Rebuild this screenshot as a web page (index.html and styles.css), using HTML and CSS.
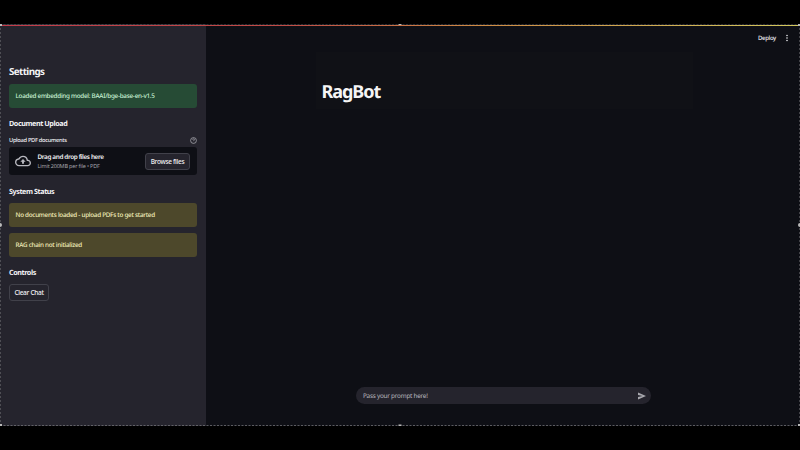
FILE: index.html
```html
<!DOCTYPE html>
<html lang="en">
<head>
<meta charset="utf-8">
<title>RagBot</title>
<link rel="stylesheet" href="styles.css">
</head>
<body>
<div class="app">
  <aside class="sidebar">
    <h2 class="settings">Settings</h2>
    <div class="alert success"><span>Loaded embedding model: BAAI/bge-base-en-v1.5</span></div>
    <h3 class="upload-title">Document Upload</h3>
    <div class="label-row">
      <span class="label">Upload PDF documents</span>
      <svg class="help" viewBox="0 0 24 24"><circle cx="12" cy="12" r="10"/><path d="M9 9a3 3 0 0 1 6 .5c0 2-3 2.500-3 4.500M12 17v.5"/></svg>
    </div>
    <div class="dropzone">
      <svg class="cloud" viewBox="0 0 24 24"><path d="M19.350 10.040A7.490 7.490 0 0 0 12 4C9.110 4 6.600 5.640 5.350 8.040A5.994 5.994 0 0 0 0 14c0 3.310 2.690 6 6 6h13c2.760 0 5-2.240 5-5 0-2.640-2.050-4.780-4.650-4.960zM19 18H6c-2.210 0-4-1.790-4-4 0-2.050 1.530-3.760 3.560-3.970l1.070-.11.5-.95A5.469 5.469 0 0 1 12 6c2.620 0 4.880 1.860 5.390 4.430l.3 1.500 1.530.11A2.980 2.980 0 0 1 22 15c0 1.650-1.350 3-3 3zM8 13h2.550v3h2.900v-3H16l-4-4z"/></svg>
      <div class="drop-text"><span class="drag">Drag and drop files here</span><span class="limit">Limit 200MB per file • PDF</span></div>
      <button class="btn browse">Browse files</button>
    </div>
    <h3 class="status-title">System Status</h3>
    <div class="alert warning"><span>No documents loaded - upload PDFs to get started</span></div>
    <div class="alert warning second"><span>RAG chain not initialized</span></div>
    <h3 class="controls-title">Controls</h3>
    <button class="btn clear">Clear Chat</button>
  </aside>
  <main class="main">
    <header class="toolbar">
      <span class="deploy">Deploy</span>
      <svg class="dots" viewBox="0 0 4 8"><circle cx="2" cy="1.500" r=".8"/><circle cx="2" cy="4" r=".8"/><circle cx="2" cy="6.500" r=".8"/></svg>
    </header>
    <section class="hero"><h1>RagBot</h1></section>
    <div class="prompt">
      <span>Pass your prompt here!</span>
      <svg class="send" viewBox="0 0 8 8"><path d="M0 .5 8 4 0 7.500V5L4.500 4 0 3z"/></svg>
    </div>
  </main>
  <svg class="selection" viewBox="0 0 800 402">
    <path class="dash faint" d="M0 .5H800"/>
    <path class="dash" d="M0 401.500H800"/>
    <path class="dash side" d="M.5 0V402M799.500 0V402"/>
    <path class="knobs" d="M0 0h2v2H0zM798 0h2v2h-2zM0 400h2v2H0zM798 400h2v2h-2zM398.500 0h3v2h-3zM398.500 400.500h3v1.500h-3z"/>
    <circle class="knobs" cx="0" cy="201" r="2"/><circle class="knobs" cx="800" cy="201" r="2"/>
  </svg>
  <div class="rainbow"></div>
</div>
</body>
</html>
```
FILE: styles.css
```css
* { box-sizing: border-box; }
body { margin: 0; background: #000; height: 450px; padding-top: 24px; overflow: hidden; font-family: "Noto Sans", sans-serif; color: #f3f3f5; text-rendering: geometricPrecision; }
.app { position: relative; display: flex; width: 800px; height: 402px; background: #0e0f15; white-space: nowrap; }
h1, h2, h3 { margin: 0; }
.sidebar { width: 206px; padding: 41px 9px 0; background: #25242d; display: flex; flex-direction: column; }
.settings { font-size: 9.800px; line-height: 14px; font-weight: 700; letter-spacing: -.6px; }
h3 { font-size: 7.200px; line-height: 10px; font-weight: 700; letter-spacing: -.42px; }
.alert { height: 24px; border-radius: 3px; padding: 0 0 1px 6.500px; display: flex; align-items: center; font-size: 6.300px; font-weight: 500; letter-spacing: -.26px; }
.success { margin-top: 5px; background: #264b35; color: #c9f3d6; }
.warning { background: #4d482b; color: #f5f0bd; }
.second { margin-top: 6px; }
.upload-title { margin-top: 11px; }
.label-row { margin-top: 6px; height: 10px; display: flex; align-items: center; justify-content: space-between; }
.label { font-size: 5.700px; font-weight: 500; letter-spacing: -.3px; }
.help { width: 7px; height: 7px; fill: none; stroke: #b0b0b7; stroke-width: 2.500; }
.dropzone { margin-top: 2px; height: 28px; border-radius: 3px; background: #0e0f15; display: flex; align-items: center; padding: 0 7px 0 6px; }
.cloud { width: 16px; height: 16px; fill: #b8b8bf; }
.drop-text { margin-left: 6.500px; display: flex; flex-direction: column; flex: 1; }
.drag { font-size: 6.400px; line-height: 9px; font-weight: 600; letter-spacing: -.38px; }
.limit { font-size: 5.500px; line-height: 10px; letter-spacing: -.18px; color: #a3a3aa; }
.btn { display: flex; align-items: center; justify-content: center; padding: 0; height: 17px; border: 1px solid #41414a; border-radius: 3px; background: #25242d; color: #f3f3f5; font-family: inherit; font-size: 6.500px; font-weight: 500; letter-spacing: -.3px; }
.browse { width: 45px; }
.status-title { margin-top: 12px; margin-bottom: 6px; }
.controls-title { margin-top: 11px; }
.clear { width: 40px; margin-top: 6px; padding-bottom: 1px; }
.main { width: 594px; display: flex; flex-direction: column; }
.toolbar { height: 28px; padding: 0 11px 0 0; display: flex; justify-content: flex-end; align-items: center; }
.deploy { font-size: 6px; line-height: 8px; padding-bottom: 1px; font-weight: 500; letter-spacing: -.3px; }
.dots { width: 4px; height: 8px; margin-left: 9px; fill: #e8e8eb; }
.hero { margin-left: 110px; width: 377px; height: 57px; background: #101116; padding: 27px 0 0 5.500px; }
h1 { font-size: 18px; line-height: 26px; font-weight: 700; letter-spacing: -1.050px; color: #f5f5f5; }
.prompt { margin: 278px 0 0 150px; width: 295px; height: 17px; border-radius: 9px; background: #25242d; padding: 0 5px 0 7px; display: flex; align-items: center; justify-content: space-between; font-size: 6.400px; letter-spacing: -.25px; color: #b7b7bd; }
.prompt span { padding-bottom: 1px; }
.send { width: 8px; height: 8px; fill: #a9a9af; }
.rainbow { position: absolute; top: 1px; left: 2px; width: 796px; height: 1px; background: linear-gradient(90deg, #c33c49, #c14b45 35%, #cf8b43 60%, #d2c75c); }
.selection { position: absolute; inset: 0; width: 800px; height: 402px; overflow: visible; }
.dash { fill: none; stroke: #77777b; stroke-width: 1; stroke-dasharray: 2 1.500; opacity: .75; }
.faint { opacity: .3; }
.side { stroke-dasharray: 2 2; opacity: .5; }
.knobs { fill: #bbb; }
```
